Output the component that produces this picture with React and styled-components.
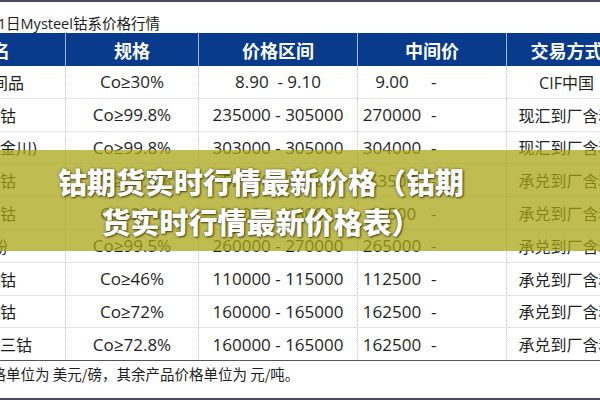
import React from 'react'
import styled, { createGlobalStyle } from 'styled-components'

const GlobalStyle = createGlobalStyle`
  html, body {
    margin: 0;
    padding: 0;
    background: #fff;
  }
  body {
    font-family: "Open Sans", "Noto Sans CJK SC", sans-serif;
  }
`

const COLS = '146px 133px 159px 149px 120px'

const rows = [
  ['钴中间品', 'Co≥30%', '8.90  - 9.10', '9.00', 'CIF中国'],
  ['电解钴', 'Co≥99.8%', '235000 - 305000', '270000', '现汇到厂含税'],
  ['电解钴(金川)', 'Co≥99.8%', '303000 - 305000', '304000', '现汇到厂含税'],
  ['硫酸钴', 'Co≥20.5%', '52000 - 55000', '53500', '承兑到厂含税'],
  ['氯化钴', 'Co≥24%', '60000 - 65000', '62500', '承兑到厂含税'],
  ['钴粉', 'Co≥99.5%', '260000 - 270000', '265000', '承兑到厂含税'],
  ['碳酸钴', 'Co≥46%', '110000 - 115000', '112500', '承兑到厂含税'],
  ['氧化钴', 'Co≥72%', '160000 - 165000', '162500', '承兑到厂含税'],
  ['四氧化三钴', 'Co≥72.8%', '160000 - 165000', '162500', '承兑到厂含税'],
]

const headers = ['品名', '规格', '价格区间', '中间价', '交易方式']

const Page = styled.div`
  position: relative;
  width: 600px;
  height: 400px;
  overflow: hidden;
  background: #fff;
  border-top: 2px solid #4b4a62;
  border-bottom: 2px solid #4b4a62;
  box-sizing: border-box;
`

const Sheet = styled.div`
  margin-left: -81px;
  width: 707px;
  display: flex;
  flex-direction: column;
`

const Title = styled.div`
  height: 31px;
  display: flex;
  align-items: flex-end;
  padding-left: 56px;
  padding-bottom: 2px;
  box-sizing: border-box;
  font-family: "Open Sans", "Noto Sans CJK SC", sans-serif;
  font-size: 14.5px;
  color: #1a1a1a;
  white-space: nowrap;
  line-height: 1;
`

const HeadRow = styled.div`
  display: grid;
  grid-template-columns: ${COLS};
  height: 33px;
  background: #083b8c;
`

const HeadCell = styled.div`
  display: flex;
  align-items: center;
  justify-content: center;
  color: #fff;
  font-family: "Noto Sans CJK SC", sans-serif;
  font-weight: 700;
  font-size: 18px;
  border-left: ${p => (p.first ? 'none' : '1px solid #9db3d8')};
`

const Row = styled.div`
  display: grid;
  grid-template-columns: ${COLS};
  height: 32.8px;
  border-bottom: 1px solid ${p => (p.last ? '#555' : '#e6e6ea')};
  box-sizing: border-box;
`

const Cell = styled.div`
  display: flex;
  align-items: center;
  justify-content: ${p => p.align || 'center'};
  font-size: ${p => (p.cjk ? '16px' : '17px')};
  color: #1e1e1e;
  white-space: pre;
  overflow: visible;
  border-left: ${p => (p.first ? 'none' : '1px dotted #c8c8cc')};
`

const MidValue = styled.span`
  width: 64px;
  text-align: center;
  margin-left: 2px;
`

const Dash = styled.span`
  margin-left: 7px;
`

const Footer = styled.div`
  height: 24px;
  display: flex;
  align-items: center;
  font-family: "Noto Sans CJK SC", sans-serif;
  font-size: 14.5px;
  color: #1e1e1e;
  white-space: nowrap;
`

const FooterNote = styled.span`
  margin-left: -29px;
`

const Band = styled.div`
  position: absolute;
  left: 0;
  right: 0;
  top: 148px;
  height: 101px;
  background: rgba(168, 166, 20, 0.74);
  display: flex;
  align-items: center;
  justify-content: center;
  padding: 0 128px 0 50px;
  box-sizing: border-box;
`

const BandText = styled.div`
  color: #fff;
  font-family: "Noto Sans CJK SC", sans-serif;
  font-weight: 900;
  font-size: 29px;
  line-height: 40px;
  text-align: center;
  text-shadow: 1px 1px 2px rgba(40, 40, 0, 0.75), 0 0 3px rgba(40, 40, 0, 0.5);
`

export default function App() {
  return (
    <Page>
      <GlobalStyle />
      <Sheet>
        <Title>7月1日Mysteel钴系价格行情</Title>
        <HeadRow>
          {headers.map((h, i) => (
            <HeadCell key={h} first={i === 0}>{h}</HeadCell>
          ))}
        </HeadRow>
        {rows.map((r, i) => (
          <Row key={i} last={i === rows.length - 1}>
            <Cell first cjk>{r[0]}</Cell>
            <Cell>{r[1]}</Cell>
            <Cell>{r[2]}</Cell>
            <Cell align="flex-start">
              <MidValue>{r[3]}</MidValue>
              <Dash>-</Dash>
            </Cell>
            <Cell cjk>{r[4]}</Cell>
          </Row>
        ))}
        <Footer>
          <FooterNote>注：钴中间品价格单位为 美元/磅，其余产品价格单位为 元/吨。</FooterNote>
        </Footer>
      </Sheet>
      <Band>
        <BandText>钴期货实时行情最新价格（钴期货实时行情最新价格表）</BandText>
      </Band>
    </Page>
  )
}
